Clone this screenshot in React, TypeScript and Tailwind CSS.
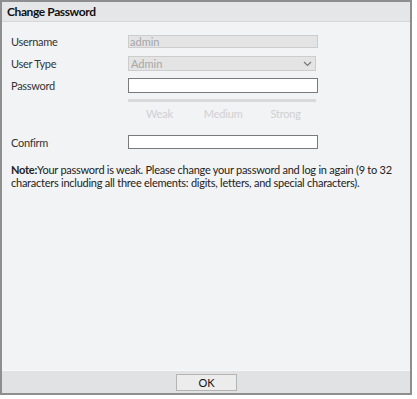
import React from "react";

const font = { fontFamily: 'Lato, "Noto Sans", sans-serif' };

const Row = ({ label, children, className }: { label: string; children: React.ReactNode; className?: string }) => (
  <div className={`flex items-center leading-[13px] ${className ?? ""}`}>
    <span className="w-[117px] text-[11px] text-[#333] tracking-[-0.3px]">{label}</span>
    {children}
  </div>
);

const App = () => {
  return (
    <div className="w-[417px] h-[399px] bg-white" style={font}>
      <div className="w-[412px] h-[395px] border-2 border-[#8e8e8e] flex flex-col bg-[#f2f3f5]">
        <div className="h-[20px] bg-[#e5e6e8] border-b border-[#d6d7d9] flex items-center pl-[5px]">
          <span className="text-[12px] font-bold text-[#111] leading-none tracking-[-0.4px]">Change Password</span>
        </div>
        <div className="flex-1 pl-[9px] pt-[13px]">
          <Row label="Username">
            <div className="w-[190px] h-[13px] bg-[#e4e4e4] border border-[#cdcdcd] flex items-center pl-[1px] text-[11px] text-[#a6a6a6] leading-none">
              admin
            </div>
          </Row>
          <Row label="User Type" className="mt-[8px]">
            <div className="w-[188px] h-[15px] bg-[#e4e4e4] border border-[#cdcdcd] flex items-center justify-between pl-[2px] pr-[3px] text-[11px] text-[#a6a6a6] leading-none">
              <span>Admin</span>
              <svg width="9" height="6" viewBox="0 0 9 6" fill="none">
                <path d="M1 1l3.5 3.5L8 1" stroke="#777" strokeWidth="1.2" />
              </svg>
            </div>
          </Row>
          <Row label="Password" className="mt-[7px]">
            <div className="w-[190px] h-[15px] bg-white border border-[#7a7a7a]" />
          </Row>
          <div className="ml-[117px] mt-[6px] w-[188px] h-[3px] bg-[#d9dadc]" />
          <div className="ml-[117px] mt-[5px] flex text-[11px] text-[#cfd0d2] leading-[13px] tracking-[-0.2px]">
            <span className="ml-[18px]">Weak</span>
            <span className="ml-[31px]">Medium</span>
            <span className="ml-[28px]">Strong</span>
          </div>
          <Row label="Confirm" className="mt-[15px]">
            <div className="w-[190px] h-[14px] bg-white border border-[#7a7a7a]" />
          </Row>
          <p className="mt-[14px] pr-[4px] text-[11px] leading-[13px] text-[#222] tracking-[-0.25px]">
            <b>Note:</b>Your password is weak. Please change your password and log in again (9 to 32
            characters including all three elements: digits, letters, and special characters).
          </p>
        </div>
        <div className="h-[23px] bg-[#e1e2e4] border-t border-[#f8f8f8] flex justify-center items-start pt-[3px]">
          <button className="w-[61px] h-[17px] bg-[#ececec] border border-[#b4b4b4] text-[11px] text-[#111] leading-none ml-[1px]">
            OK
          </button>
        </div>
      </div>
    </div>
  );
};

export default App;
